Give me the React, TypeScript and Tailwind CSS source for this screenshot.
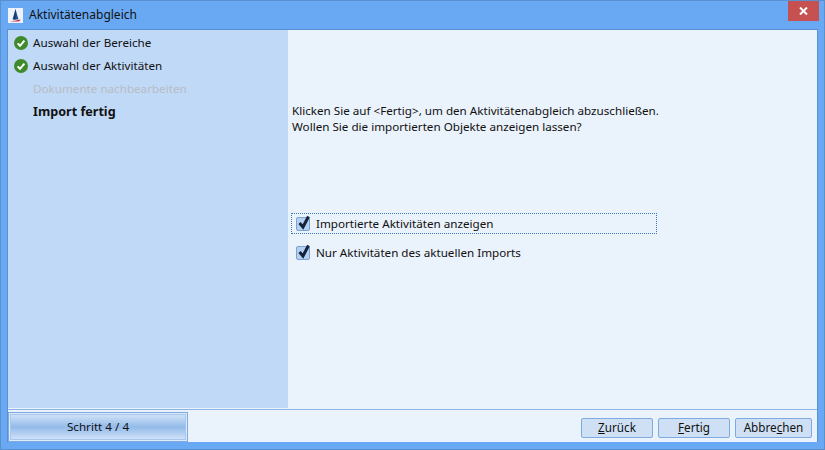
import React from "react";

const Check = () => (
  <svg width="14" height="14" viewBox="0 0 14 14" className="shrink-0">
    <circle cx="7" cy="7" r="7" fill="#3f8a2c" />
    <path d="M3.6 7.4 L6 9.8 L10.4 4.6" fill="none" stroke="#fff" strokeWidth="2" />
  </svg>
);

const Tick = () => (
  <span className="relative block w-[14px] h-[14px] shrink-0 rounded-[2px] border border-[#7ba3d6] bg-[#b6d0f0]">
    <svg width="14" height="16" viewBox="0 0 14 16" className="absolute left-0 top-[-4px]">
      <path d="M2.5 9 L6 13 L11.5 2.5" fill="none" stroke="#14233c" strokeWidth="3" />
    </svg>
  </span>
);

const Btn = ({ pre, u, post, w }: { pre: string; u: string; post: string; w: string }) => (
  <div className={`${w} h-[20px] flex items-center justify-center rounded-[2px] border border-[#7daae0] bg-[#cfe0f4] text-[11.7px] text-[#111]`}>
    {pre}<span className="underline">{u}</span>{post}
  </div>
);

const Step = ({ children }: { children: React.ReactNode }) => (
  <div className="h-[23px] flex items-center gap-[5px] pl-[6px] text-[11.65px] text-[#111]">
    <Check />
    {children}
  </div>
);

export default function App() {
  return (
    <div className="w-[825px] h-[450px] flex flex-col bg-[#69a9f3] border border-[#5a8fd0] pl-[6px] pr-[6px] pb-[7px] font-['Noto_Sans',sans-serif]">
      <div className="h-[28px] shrink-0 flex items-center relative pl-[1px]">
        <svg width="15" height="15" viewBox="0 0 15 15" className="mr-[6px]">
          <rect width="15" height="15" fill="#eef2fa" />
          <path d="M7.5 1 L4.5 11.5 L10.5 11.5 Z" fill="#24508f" />
          <path d="M7.5 1 L5.5 11.5 L7.5 11.5 Z" fill="#172f5e" />
          <path d="M2 13.5 L13 11.5 L11 13.5 Z" fill="#c8324a" />
        </svg>
        <span className="text-[12px] text-[#111]">Aktivitätenabgleich</span>
        <div className="absolute right-[-1px] top-0 w-[31px] h-[20px] bg-[#c75050] flex items-center justify-center">
          <svg width="9" height="8" viewBox="0 0 9 8">
            <path d="M1 0.5 L8 7.5 M8 0.5 L1 7.5" stroke="#fff" strokeWidth="2" />
          </svg>
        </div>
      </div>
      <div className="flex-1 flex flex-col bg-[#eaf2fb] border-t border-l border-r border-[#5a8fd0] border-b-0 min-h-0">
        <div className="flex-1 flex min-h-0 border-b border-[#eaf2fb]">
          <div className="w-[280px] shrink-0 bg-[#c0d9f7] pt-[1px]">
            <Step>Auswahl der Bereiche</Step>
            <Step>Auswahl der Aktivitäten</Step>
            <div className="h-[23px] flex items-center pl-[25px] text-[11.65px] text-[#b8bcc4]">Dokumente nachbearbeiten</div>
            <div className="h-[23px] flex items-center pl-[25px] pt-[2px] text-[12.6px] font-bold text-[#111]">Import fertig</div>
          </div>
          <div className="flex-1 pl-[4px] pt-[73px] text-[11.65px] text-[#111] leading-[16px]">
            <div>Klicken Sie auf &lt;Fertig&gt;, um den Aktivitätenabgleich abzuschließen.</div>
            <div>Wollen Sie die importierten Objekte anzeigen lassen?</div>
            <div className="mt-[78px] ml-[-1px] w-[366px] h-[21px] flex items-center gap-[6px] pl-[4px] border border-dotted border-[#3a78b8]">
              <Tick />
              <span>Importierte Aktivitäten anzeigen</span>
            </div>
            <div className="mt-[8px] h-[21px] flex items-center gap-[6px] pl-[4px]">
              <Tick />
              <span>Nur Aktivitäten des aktuellen Imports</span>
            </div>
          </div>
        </div>
        <div className="h-[33px] shrink-0 flex items-center justify-between border-t border-[#8db4e6] pr-[5px]">
          <div className="w-[180px] h-[30px] mt-[1px] border border-[#7daae0] p-[1px] bg-[#dceafa]">
            <div className="w-full h-full flex items-center justify-center border border-[#a9c7ec] bg-gradient-to-b from-[#cfe1f7] via-[#93bbe9] to-[#cfe1f7] text-[11.65px] text-[#111]">
              Schritt 4 / 4
            </div>
          </div>
          <div className="flex gap-[5px] mt-[3px]">
            <Btn w="w-[72px]" pre="" u="Z" post="urück" />
            <Btn w="w-[72px]" pre="" u="F" post="ertig" />
            <Btn w="w-[77px]" pre="Abbre" u="c" post="hen" />
          </div>
        </div>
      </div>
    </div>
  );
}
